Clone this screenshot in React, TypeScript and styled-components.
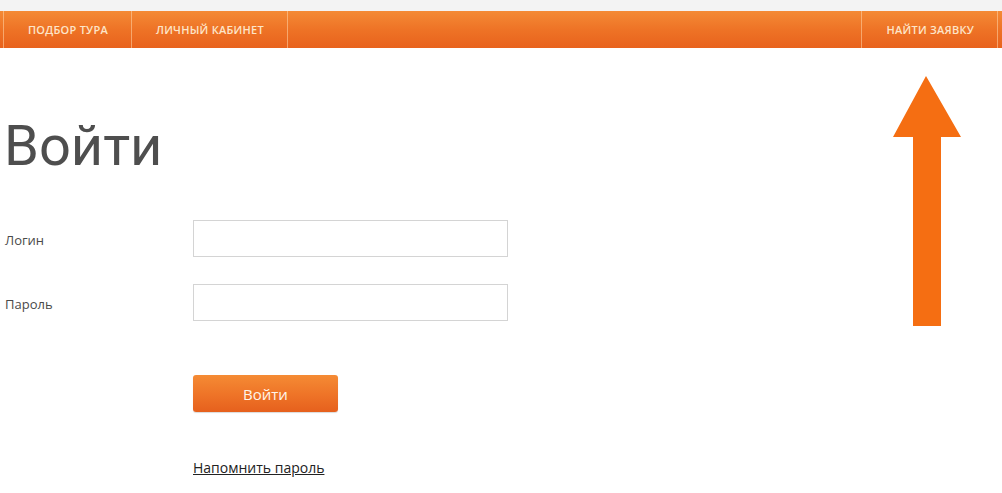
import React from 'react';
import styled, { createGlobalStyle } from 'styled-components';

const GlobalStyle = createGlobalStyle`
  html, body {
    margin: 0;
    padding: 0;
    background: #ffffff;
    font-family: "Open Sans", "Liberation Sans", sans-serif;
  }
`;

const Page = styled.div`
  position: relative;
  width: 1002px;
  height: 493px;
  overflow: hidden;
  background: #ffffff;
`;

const TopStrip = styled.div`
  height: 11px;
  background: #f3f3f3;
`;

const NavBar = styled.nav`
  display: flex;
  justify-content: space-between;
  height: 37px;
  padding: 0 4px 0 3px;
  background: linear-gradient(to bottom, #f48a35 0%, #ee7326 50%, #e8621d 100%);
`;

const NavGroup = styled.div`
  display: flex;
  border-left: 1px solid rgba(255, 214, 170, 0.55);
  border-right: 1px solid rgba(255, 214, 170, 0.55);
`;

const NavItem = styled.a<{ $first?: boolean }>`
  display: flex;
  align-items: center;
  padding: 0 23px 0 24px;
  font-size: 11px;
  font-weight: 600;
  letter-spacing: 0.25px;
  color: #fde5c8;
  text-decoration: none;
  white-space: nowrap;
  border-left: ${({ $first }) => ($first ? 'none' : '1px solid rgba(255, 214, 170, 0.55)')};
`;

const Content = styled.main`
  padding: 66px 0 0 4px;
`;

const Title = styled.h1`
  margin: 0 0 42px 0;
  font-family: Roboto, "Liberation Sans", sans-serif;
  font-weight: 400;
  font-size: 56px;
  line-height: 64px;
  color: #4e4e4e;
`;

const Form = styled.form`
  display: grid;
  grid-template-columns: 189px 315px;
  row-gap: 27px;
  align-items: center;
`;

const Label = styled.label`
  font-size: 13px;
  color: #4a4a4a;
  padding: 3px 0 0 1px;
`;

const Input = styled.input`
  box-sizing: border-box;
  width: 315px;
  height: 37px;
  border: 1px solid #d4d4d4;
  background: #ffffff;
  outline: none;
`;

const Actions = styled.div`
  grid-column: 2;
  display: flex;
  flex-direction: column;
  align-items: flex-start;
  gap: 46px;
  padding-top: 27px;
`;

const Button = styled.button`
  width: 145px;
  height: 37px;
  border: none;
  border-radius: 3px;
  background: linear-gradient(to bottom, #f58b34 0%, #ee7327 55%, #e6601d 100%);
  box-shadow: 0 1px 1px rgba(0, 0, 0, 0.15);
  color: #fff5ea;
  font-family: "Open Sans", "Liberation Sans", sans-serif;
  font-size: 15px;
  cursor: pointer;
`;

const RemindLink = styled.a`
  font-size: 14px;
  color: #222222;
  text-decoration: underline;
`;

const Arrow = styled.svg`
  position: absolute;
  left: 893px;
  top: 76px;
`;

export default function App() {
  return (
    <Page>
      <GlobalStyle />
      <TopStrip />
      <NavBar>
        <NavGroup>
          <NavItem $first href="#">ПОДБОР ТУРА</NavItem>
          <NavItem href="#">ЛИЧНЫЙ КАБИНЕТ</NavItem>
        </NavGroup>
        <NavGroup>
          <NavItem $first href="#">НАЙТИ ЗАЯВКУ</NavItem>
        </NavGroup>
      </NavBar>
      <Content>
        <Title>Войти</Title>
        <Form onSubmit={(e) => e.preventDefault()}>
          <Label>Логин</Label>
          <Input type="text" />
          <Label>Пароль</Label>
          <Input type="password" />
          <Actions>
            <Button type="submit">Войти</Button>
            <RemindLink href="#">Напомнить пароль</RemindLink>
          </Actions>
        </Form>
      </Content>
      <Arrow width="68" height="250" viewBox="0 0 68 250">
        <polygon points="33,0 68,61 48,61 48,250 20,250 20,61 0,61" fill="#f56e12" />
      </Arrow>
    </Page>
  );
}
